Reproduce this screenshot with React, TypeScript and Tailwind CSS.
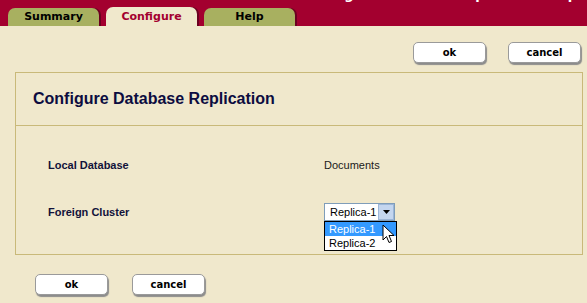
export default function App() {
  const tabs = [
    { label: "Summary", active: false },
    { label: "Configure", active: true },
    { label: "Help", active: false },
  ];

  return (
    <div className="h-[303px] w-[587px] overflow-hidden bg-[#f0e8cc] font-['Liberation_Sans',Arial,sans-serif]">
      {/* header bar with tabs */}
      <div className="flex h-[26px] items-end bg-[#a3002f] pl-2">
        {tabs.map((t) => (
          <div
            key={t.label}
            className={
              t.active
                ? "mr-[7px] flex h-[19px] w-[91px] items-center justify-center rounded-t-[7px] bg-[#f0e8cc] pt-[1px] font-['DejaVu_Sans',Verdana,sans-serif] text-[11px] font-bold text-[#a3002f] shadow-[2px_0_0_#6b0020]"
                : "mr-[7px] flex h-[18px] w-[91px] items-center justify-center rounded-t-[7px] bg-[#a8b060] pt-[1px] font-['DejaVu_Sans',Verdana,sans-serif] text-[11px] font-bold text-black shadow-[2px_0_0_#6b0020]"
            }
          >
            {t.label}
          </div>
        ))}
        <div className="ml-auto mr-[10px] self-start -mt-[13px] whitespace-nowrap font-['DejaVu_Sans',Verdana,sans-serif] text-[13px] font-bold leading-[15px] text-white">
          Configure Database Replication Step
        </div>
      </div>

      {/* top buttons */}
      <div className="mt-4 flex justify-end gap-[22px] pr-[6px]">
        <Btn label="ok" />
        <Btn label="cancel" />
      </div>

      {/* panel */}
      <div className="ml-[15px] mt-[9px] w-[568px] border border-[#c9b979]">
        <div className="flex h-[53px] items-center border-b border-[#c9b979] pl-[17px]">
          <h1 className="text-[16px] font-bold text-[#0c0c40]">Configure Database Replication</h1>
        </div>
        <div className="relative h-[128px] pl-[32px] pt-[32px] text-[11px]">
          <div className="flex h-[14px] items-center">
            <span className="w-[276px] font-bold text-[#12123a]">Local Database</span>
            <span className="text-[#1a1a1a]">Documents</span>
          </div>
          <div className="mt-[31px] flex items-center">
            <span className="w-[276px] font-bold text-[#12123a]">Foreign Cluster</span>
            <div className="relative">
              <div className="flex h-[18px] w-[71px] items-center border border-[#7f9db9] bg-white">
                <span className="flex-1 pl-[5px] text-[11px] text-black">Replica-1</span>
                <span className="flex h-[16px] w-[16px] items-center justify-center border border-[#9cb6d8] bg-[#c4d6ef]">
                  <svg width="7" height="4" viewBox="0 0 7 4">
                    <path d="M0 0h7L3.5 4z" fill="#000" />
                  </svg>
                </span>
              </div>
              <div className="absolute left-0 top-[18px] w-[73px] border border-black bg-white text-[11px]">
                <div className="h-[14px] bg-[#3399ff] pl-[4px] leading-[14px] text-white">Replica-1</div>
                <div className="h-[14px] pl-[4px] leading-[14px] text-black">Replica-2</div>
              </div>
              <svg className="absolute left-[58px] top-[21px]" width="14" height="20" viewBox="0 0 14 20">
                <path
                  d="M1 1v15l3.5-3.5 2.5 6 2.5-1-2.5-6h5z"
                  fill="#fff"
                  stroke="#000"
                  strokeWidth="1"
                  strokeLinejoin="miter"
                />
              </svg>
            </div>
          </div>
        </div>
      </div>

      {/* bottom buttons */}
      <div className="ml-[35px] mt-[19px] flex gap-[24px]">
        <Btn label="ok" />
        <Btn label="cancel" />
      </div>
    </div>
  );
}

function Btn({ label }: { label: string }) {
  return (
    <button className="flex h-[21px] w-[73px] items-center justify-center rounded-[5px] border border-[#9a9a9a] bg-white font-['DejaVu_Sans',Tahoma,sans-serif] text-[10px] font-bold text-black shadow-[1px_2px_1px_#8c8c8c]">
      {label}
    </button>
  );
}
